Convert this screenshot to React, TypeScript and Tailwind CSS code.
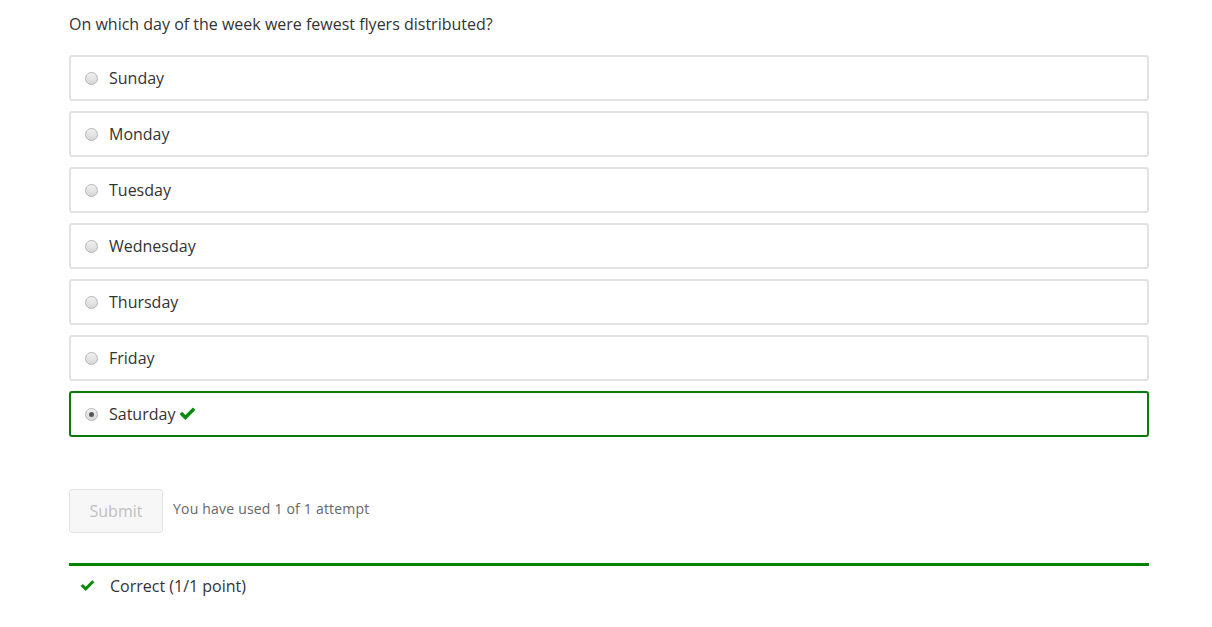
import React from 'react';

const days = ['Sunday', 'Monday', 'Tuesday', 'Wednesday', 'Thursday', 'Friday', 'Saturday'];

const Check: React.FC<{ className?: string }> = ({ className }) => (
  <svg className={className} viewBox="0 0 16 14" fill="currentColor">
    <path d="M0.6 7.6 L2.9 5.3 L6 8.4 L13.1 1.3 L15.4 3.6 L6 13 Z" />
  </svg>
);

const Radio: React.FC<{ checked?: boolean }> = ({ checked }) => (
  <span className="w-[13px] h-[13px] rounded-full border border-[#b5b5b5] bg-gradient-to-b from-[#f0f0f0] to-[#d8d8d8] flex items-center justify-center shrink-0">
    {checked && <span className="w-[5px] h-[5px] rounded-full bg-[#555]" />}
  </span>
);

export default function App() {
  const answer = 'Saturday';
  return (
    <div className="bg-white min-h-[627px] px-[69px] text-[#333]" style={{ fontFamily: '"Open Sans", sans-serif' }}>
      <p className="pt-[12px] text-[16px] leading-[24px]">On which day of the week were fewest flyers distributed?</p>

      <div className="mt-[19px] flex flex-col gap-[10px] w-[1080px]">
        {days.map((d) => {
          const sel = d === answer;
          return (
            <label
              key={d}
              className={`h-[46px] flex items-center pl-[14px] rounded-[3px] border-2 ${sel ? 'border-[#0a7a0a]' : 'border-[#e2e2e2]'}`}
            >
              <Radio checked={sel} />
              <span className="ml-[11px] text-[16px] leading-[24px] -mt-[1px] flex items-center">
                {d}
                {sel && <Check className="w-[17px] h-[15px] ml-[4px] text-[#0a8a0a]" />}
              </span>
            </label>
          );
        })}
      </div>

      <div className="mt-[52px] flex items-center">
        <button className="w-[94px] h-[44px] rounded-[3px] border border-[#e3e3e3] bg-[#f7f7f7] text-[#c0c0c0] text-[16px]">
          Submit
        </button>
        <span className="ml-[10px] -mt-[6px] text-[14px] tracking-[0.2px] text-[#666]">You have used 1 of 1 attempt</span>
      </div>

      <div className="mt-[30px] w-[1080px] border-t-[3px] border-[#008100] flex items-center h-[41px] pt-[1px]">
        <Check className="ml-[11px] w-[15px] h-[13px] text-[#0a8a0a]" />
        <span className="ml-[15px] text-[16px]">Correct (1/1 point)</span>
      </div>
    </div>
  );
}
